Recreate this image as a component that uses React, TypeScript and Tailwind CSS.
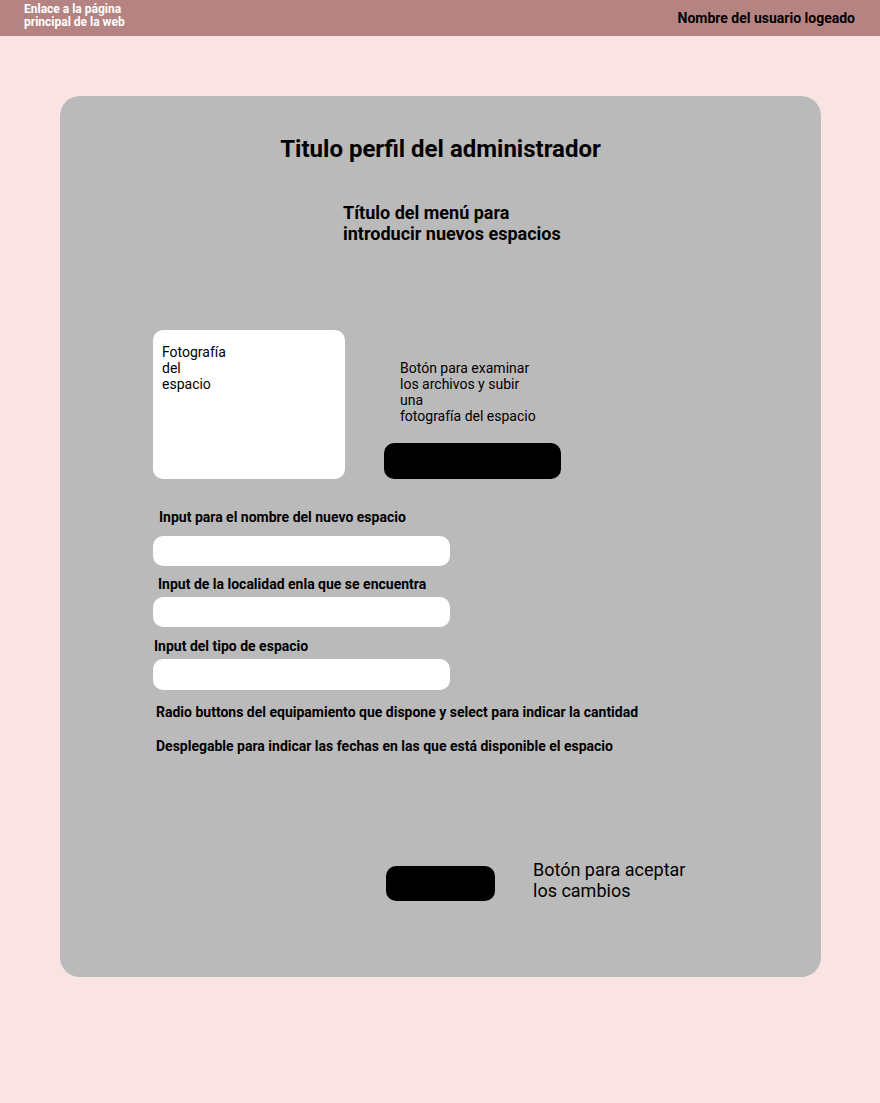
export default function App() {
  return (
    <div className="min-h-[1103px] w-full bg-[#f9e4e3] font-['Roboto',sans-serif] text-black">
      <header className="flex h-[36px] items-center justify-between bg-[#b58482] pl-[24px] pr-[25px]">
        <div className="-mt-[4px] text-[12px] font-bold leading-[13px] text-white">
          Enlace a la página
          <br />
          principal de la web
        </div>
        <div className="text-[14px] font-bold leading-[16px]">Nombre del usuario logeado</div>
      </header>

      <main className="ml-[60px] mt-[60px] h-[881px] w-[761px] rounded-[20px] bg-[#bababa] pt-[39px]">
        <h1 className="text-center text-[24px] font-bold leading-[28px]">Titulo perfil del administrador</h1>
        <h2 className="ml-[283px] mt-[39px] text-[18px] font-bold leading-[21px]">
          Título del menú para
          <br />
          introducir nuevos espacios
        </h2>

        <div className="ml-[93px]">
          <div className="mt-[86px] flex">
            <div className="h-[149px] w-[192px] rounded-[10px] bg-white pl-[9px] pt-[14px] text-[14px] leading-[16px]">
              Fotografía
              <br />
              del
              <br />
              espacio
            </div>
            <div className="ml-[39px] flex flex-col pt-[30px]">
              <p className="ml-[16px] text-[14px] leading-[16px]">
                Botón para examinar
                <br />
                los archivos y subir
                <br />
                una
                <br />
                fotografía del espacio
              </p>
              <div className="mt-[19px] h-[36px] w-[177px] rounded-[10px] bg-black" />
            </div>
          </div>

          <p className="ml-[6px] mt-[30px] text-[14px] font-bold leading-[16px]">Input para el nombre del nuevo espacio</p>
          <div className="mt-[11px] h-[30px] w-[297px] rounded-[10px] bg-white" />

          <p className="ml-[5px] mt-[10px] text-[14px] font-bold leading-[16px]">Input de la localidad enla que se encuentra</p>
          <div className="mt-[5px] h-[30px] w-[297px] rounded-[10px] bg-white" />

          <p className="ml-[1px] mt-[11px] text-[14px] font-bold leading-[16px]">Input del tipo de espacio</p>
          <div className="mt-[5px] h-[31px] w-[297px] rounded-[10px] bg-white" />

          <p className="ml-[3px] mt-[14px] text-[14px] font-bold leading-[16px]">
            Radio buttons del equipamiento que dispone y select para indicar la cantidad
          </p>
          <p className="ml-[3px] mt-[18px] text-[14px] font-bold leading-[16px]">
            Desplegable para indicar las fechas en las que está disponible el espacio
          </p>

          <div className="ml-[233px] mt-[105px] flex items-start">
            <div className="mt-[7px] h-[35px] w-[109px] rounded-[10px] bg-black" />
            <p className="ml-[38px] text-[18px] leading-[21px]">
              Botón para aceptar
              <br />
              los cambios
            </p>
          </div>
        </div>
      </main>
    </div>
  );
}
